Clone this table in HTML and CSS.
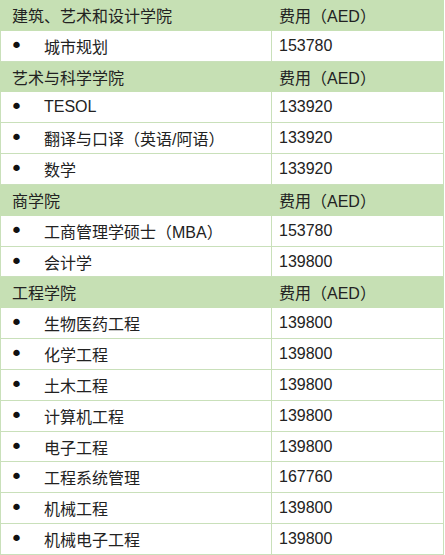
FILE: index.html
```html
<!DOCTYPE html>
<html lang="zh">
<head>
<meta charset="utf-8">
<link rel="stylesheet" href="styles.css">
</head>
<body>
<div class="table">
  <div class="row head"><div class="c1">建筑、艺术和设计学院</div><div class="c2">费用（AED）</div></div>
  <div class="row"><div class="c1"><span class="dot">•</span><span>城市规划</span></div><div class="c2">153780</div></div>
  <div class="row head"><div class="c1">艺术与科学学院</div><div class="c2">费用（AED）</div></div>
  <div class="row"><div class="c1"><span class="dot">•</span><span>TESOL</span></div><div class="c2">133920</div></div>
  <div class="row"><div class="c1"><span class="dot">•</span><span>翻译与口译（英语/阿语）</span></div><div class="c2">133920</div></div>
  <div class="row"><div class="c1"><span class="dot">•</span><span>数学</span></div><div class="c2">133920</div></div>
  <div class="row head"><div class="c1">商学院</div><div class="c2">费用（AED）</div></div>
  <div class="row"><div class="c1"><span class="dot">•</span><span>工商管理学硕士（MBA）</span></div><div class="c2">153780</div></div>
  <div class="row"><div class="c1"><span class="dot">•</span><span>会计学</span></div><div class="c2">139800</div></div>
  <div class="row head"><div class="c1">工程学院</div><div class="c2">费用（AED）</div></div>
  <div class="row"><div class="c1"><span class="dot">•</span><span>生物医药工程</span></div><div class="c2">139800</div></div>
  <div class="row"><div class="c1"><span class="dot">•</span><span>化学工程</span></div><div class="c2">139800</div></div>
  <div class="row"><div class="c1"><span class="dot">•</span><span>土木工程</span></div><div class="c2">139800</div></div>
  <div class="row"><div class="c1"><span class="dot">•</span><span>计算机工程</span></div><div class="c2">139800</div></div>
  <div class="row"><div class="c1"><span class="dot">•</span><span>电子工程</span></div><div class="c2">139800</div></div>
  <div class="row"><div class="c1"><span class="dot">•</span><span>工程系统管理</span></div><div class="c2">167760</div></div>
  <div class="row"><div class="c1"><span class="dot">•</span><span>机械工程</span></div><div class="c2">139800</div></div>
  <div class="row"><div class="c1"><span class="dot">•</span><span>机械电子工程</span></div><div class="c2">139800</div></div>
</div>
</body>
</html>
```
FILE: styles.css
```css
html, body {
  margin: 0;
  padding: 0;
  background: #ffffff;
}
body {
  font-family: "Liberation Sans", "Noto Sans CJK SC", sans-serif;
  font-size: 16px;
  color: #222222;
}
.table {
  width: 444px;
  display: flex;
  flex-direction: column;
}
.row {
  display: grid;
  grid-template-columns: 272px 172px;
  height: 30.83px;
  box-sizing: border-box;
  border-bottom: 1px solid #c9e0ba;
}
.row.head {
  background: #c6e0b4;
  border-bottom-color: #c6e0b4;
}
.c1, .c2 {
  display: flex;
  align-items: center;
  box-sizing: border-box;
  white-space: nowrap;
}
.c1 {
  padding-left: 11px;
  border-left: 1px solid #c9e0ba;
  border-right: 1px solid #c9e0ba;
}
.c2 {
  padding-left: 7px;
  border-right: 1px solid #c9e0ba;
}
.head .c1, .head .c2 {
  border-color: #c6e0b4;
}
.dot {
  width: 34px;
  font-family: "DejaVu Sans", sans-serif;
  font-size: 22px;
  line-height: 1;
  color: #111111;
  margin-left: -2px;
}
```
